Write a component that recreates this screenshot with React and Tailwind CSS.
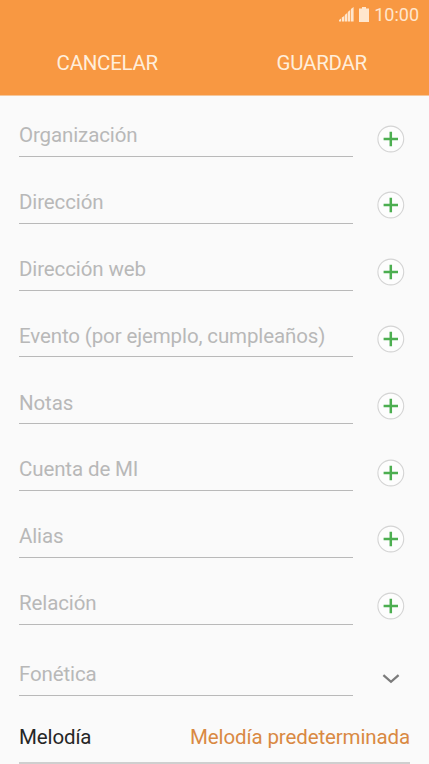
import React from 'react';

const fields = [
  'Organización',
  'Dirección',
  'Dirección web',
  'Evento (por ejemplo, cumpleaños)',
  'Notas',
  'Cuenta de MI',
  'Alias',
  'Relación',
];

const SignalIcon = () => (
  <svg width="15" height="15" viewBox="0 0 15 15" fill="currentColor" aria-hidden="true">
    <path d="M0 14.6V13l2-1.4v3zM2.8 14.6v-4L5.2 9v5.6zM5.8 14.6V8l2.4-2v8.6zM8.8 14.6V5l2.4-2v11.6zM11.9 14.6V2l2.7-2v14.6z" />
  </svg>
);

const BatteryIcon = () => (
  <svg width="10" height="15" viewBox="0 0 10 15" fill="currentColor" aria-hidden="true">
    <path d="M3 0h4v1.5h3V15H0V1.5h3z" />
  </svg>
);

const PlusIcon = () => (
  <svg width="28" height="28" viewBox="0 0 28 28" fill="none" aria-hidden="true">
    <circle cx="13.8" cy="14" r="12.9" fill="#fdfdfd" stroke="#d4d4d4" strokeWidth="1.1" />
    <path d="M13.8 6.8v14.4M6.6 14H21" stroke="#4cae50" strokeWidth="2.5" />
  </svg>
);

const ChevronIcon = () => (
  <svg width="18" height="10" viewBox="0 0 18 10" fill="none" aria-hidden="true">
    <path d="M1.4 1.2 9 7.8l7.6-6.6" stroke="#7b7b7b" strokeWidth="2.3" />
  </svg>
);

const Field = ({ label, action }) => (
  <div className="flex h-11 items-center">
    <div className="flex h-full w-[334px] items-center border-b border-[#b9b9b9]">
      <span className="pt-[1.6px] text-[#b8b8b8]">{label}</span>
    </div>
    <button type="button" aria-label={label} className="ml-6 flex w-7 justify-center">
      {action}
    </button>
  </div>
);

const App = () => {
  return (
    <div className="h-[764px] w-[429px] overflow-hidden bg-[#fafafa] font-[Roboto,sans-serif] text-[20.5px] leading-6 tracking-[-0.12px]">
      <header className="h-24 border-b border-[#f5c79b] bg-[#f89842] text-[#ffeedb]">
        <div className="flex h-[30px] items-center justify-end pr-[10px] text-[#ffe6cd]">
          <span className="-mt-px"><SignalIcon /></span>
          <span className="-mt-px ml-[5px]"><BatteryIcon /></span>
          <span className="ml-[5px] text-[18px] tracking-normal">10:00</span>
        </div>
        <div className="flex h-[65px] items-center tracking-[-0.28px]">
          <button type="button" className="h-full flex-1">CANCELAR</button>
          <button type="button" className="h-full flex-1">GUARDAR</button>
        </div>
      </header>

      <main className="pl-[19px] pt-[17px]">
        <div className="flex flex-col gap-[22.83px]">
          {fields.map((label) => (
            <Field
              key={label}
              label={label}
              action={<span className="pt-[7px]"><PlusIcon /></span>}
            />
          ))}
        </div>
        <div className="mt-[27.2px]">
          <Field label="Fonética" action={<span className="pt-[11px]"><ChevronIcon /></span>} />
        </div>
        <div className="mr-[19px] mt-[19px] flex h-[49px] items-center justify-between border-b-2 border-[#cfcfcf] pb-[3px]">
          <span className="text-[#262626]">Melodía</span>
          <span className="text-[#d98943]">Melodía predeterminada</span>
        </div>
      </main>
    </div>
  );
};

export default App;
